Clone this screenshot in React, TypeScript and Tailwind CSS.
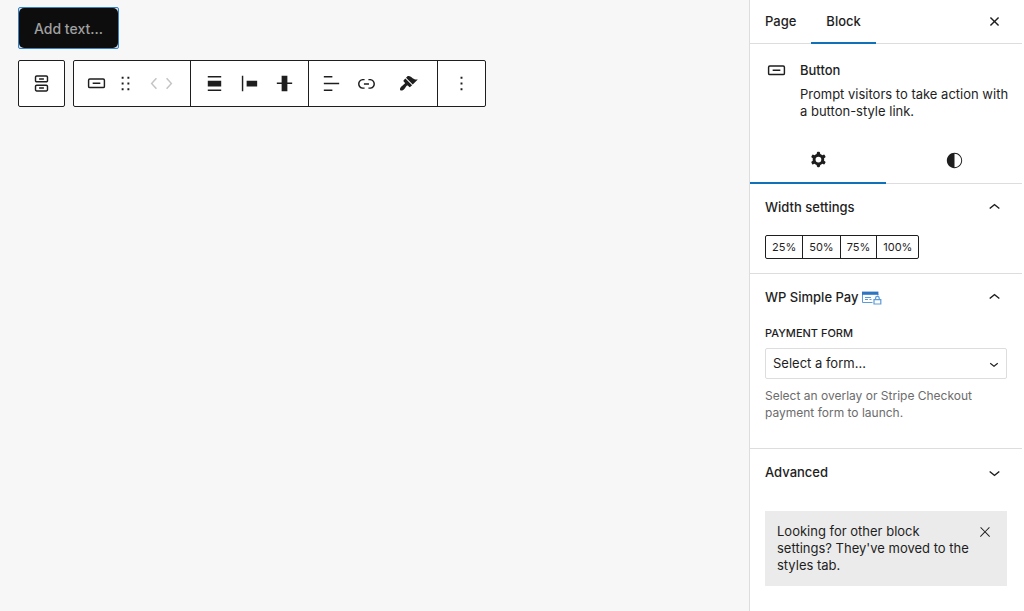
import { useState, type ReactNode } from "react";
import clsx from "clsx";

const icons = {
  buttons:
    "M14.5 17.5H9.5V16H14.5V17.5Z M14.5 8H9.5V6.5H14.5V8Z M7 3.5H17C18.1046 3.5 19 4.39543 19 5.5V9C19 10.1046 18.1046 11 17 11H7C5.89543 11 5 10.1046 5 9V5.5C5 4.39543 5.89543 3.5 7 3.5ZM17 5H7C6.72386 5 6.5 5.22386 6.5 5.5V9C6.5 9.27614 6.72386 9.5 7 9.5H17C17.2761 9.5 17.5 9.27614 17.5 9V5.5C17.5 5.22386 17.2761 5 17 5Z M7 13H17C18.1046 13 19 13.8954 19 15V18.5C19 19.6046 18.1046 20.5 17 20.5H7C5.89543 20.5 5 19.6046 5 18.5V15C5 13.8954 5.89543 13 7 13ZM17 14.5H7C6.72386 14.5 6.5 14.7239 6.5 15V18.5C6.5 18.7761 6.72386 19 7 19H17C17.2761 19 17.5 18.7761 17.5 18.5V15C17.5 14.7239 17.2761 14.5 17 14.5Z",
  button:
    "M8 12.5h8V11H8v1.5Z M19 6.5H5a2 2 0 0 0-2 2V15a2 2 0 0 0 2 2h14a2 2 0 0 0 2-2V8.5a2 2 0 0 0-2-2ZM5 8h14a.5.5 0 0 1 .5.5V15a.5.5 0 0 1-.5.5H5a.5.5 0 0 1-.5-.5V8.5A.5.5 0 0 1 5 8Z",
  drag: "M8 7h2V5H8v2zm0 6h2v-2H8v2zm0 6h2v-2H8v2zm6-14v2h2V5h-2zm0 8h2v-2h-2v2zm0 6h2v-2h-2v2z",
  left: "M14.6 7l-1.2-1L8 12l5.4 6 1.2-1-4.6-5z",
  right: "M10.6 6L9.4 7l4.6 5-4.6 5 1.2 1 5.4-6z",
  alignNone: "M5 15h14V9H5v6zm0 4.8h14v-1.5H5v1.5zM5 4.2v1.5h14V4.2H5z",
  justifyLeft: "M9 9v6h11V9H9zM4 20h1.5V4H4v16z",
  verticalCenter: "M20 11h-5V4H9v7H4v1.5h5V20h6v-7.5h5z",
  textLeft: "M4 19.8h8.9v-1.5H4v1.5zm8.9-15.6H4v1.5h8.9V4.2zm-8.9 7v1.5h16v-1.5H4z",
  link: "M15.6 7.2H14v1.5h1.6c2 0 3.7 1.7 3.7 3.7s-1.7 3.7-3.7 3.7H14v1.5h1.6c2.8 0 5.2-2.3 5.2-5.2 0-2.9-2.3-5.2-5.2-5.2zM4.7 12.4c0-2 1.7-3.7 3.7-3.7H10V7.2H8.4c-2.9 0-5.2 2.3-5.2 5.2 0 2.9 2.3 5.2 5.2 5.2H10v-1.5H8.4c-2 0-3.7-1.7-3.7-3.7zm4.6.9h5.3v-1.5H9.3v1.5z",
  more: "M13 19h-2v-2h2v2zm0-6h-2v-2h2v2zm0-6h-2V5h2v2z",
  cog: "M10.289 4.836A1 1 0 0111.275 4h1.306a1 1 0 01.987.836l.244 1.466c.787.26 1.503.679 2.108 1.218l1.393-.522a1 1 0 011.216.437l.653 1.13a1 1 0 01-.23 1.273l-1.148.944a6.025 6.025 0 010 2.435l1.149.946a1 1 0 01.23 1.272l-.653 1.13a1 1 0 01-1.216.437l-1.394-.522c-.605.54-1.32.958-2.108 1.218l-.244 1.466a1 1 0 01-.987.836h-1.306a1 1 0 01-.986-.836l-.244-1.466a5.995 5.995 0 01-2.108-1.218l-1.394.522a1 1 0 01-1.217-.436l-.653-1.131a1 1 0 01.23-1.272l1.149-.946a6.026 6.026 0 010-2.435l-1.148-.944a1 1 0 01-.23-1.272l.653-1.131a1 1 0 011.217-.437l1.393.522a5.994 5.994 0 012.108-1.218l.244-1.466zM14.929 12a3 3 0 11-6 0 3 3 0 016 0z",
  styles:
    "M12 4c-4.4 0-8 3.6-8 8s3.6 8 8 8 8-3.6 8-8-3.6-8-8-8zm0 15V5c3.9 0 7 3.1 7 7s-3.1 7-7 7z",
  up: "M6.5 12.4L12 8l5.5 4.4-.9 1.2L12 10l-4.5 3.6-1-1.2z",
  down: "M17.5 11.6L12 16l-5.5-4.4.9-1.2L12 14l4.5-3.6 1 1.2z",
  closeSmall:
    "M12 13.06l3.712 3.713 1.061-1.06L13.061 12l3.712-3.712-1.06-1.06L12 10.938 8.288 7.227l-1.061 1.06L10.939 12l-3.712 3.712 1.06 1.061L12 13.061z",
  close:
    "M13 11.8l6.1-6.3-1-1-6.1 6.2-6.1-6.2-1 1 6.1 6.3-6.5 6.7 1 1 6.5-6.6 6.5 6.6 1-1z",
};

type IconName = keyof typeof icons;

const Icon = ({ name, size = 23 }: { name: IconName; size?: number }) => (
  <svg
    viewBox="0 0 24 24"
    width={size}
    height={size}
    fill="currentColor"
    fillRule="evenodd"
    className="shrink-0"
    aria-hidden="true"
  >
    <path d={icons[name]} />
  </svg>
);

const BrushIcon = () => (
  <svg viewBox="0 0 20 20" width="19" height="19" fill="currentColor" aria-hidden="true">
    <path d="M14.48 11.06L7.41 3.99l1.5-1.5c.5-.56 2.3-.47 3.51.32 1.21.8 1.43 1.28 2.91 2.1 1.18.64 2.45 1.26 4.45.85zm-.71.71L6.7 4.7 4.93 6.47c-.39.39-.39 1.02 0 1.41l1.06 1.06c.39.39.39 1.03 0 1.42-.6.6-1.43 1.11-2.21 1.69-.35.26-.7.53-1.01.84C1.43 14.23.4 16.08 1.4 17.07c.99 1 2.84-.03 4.18-1.36.31-.31.58-.66.85-1.02.57-.78 1.08-1.61 1.69-2.21.39-.39 1.02-.39 1.41 0l1.06 1.06c.39.39 1.02.39 1.41 0z" />
  </svg>
);

const SimplePayIcon = () => (
  <svg viewBox="0 0 20 14" width="20" height="14" fill="none" stroke="#5b9bd8" aria-hidden="true">
    <path d="M.5 3v8.5h10M15.9 3v1.5" />
    <path d="M0 .6h16.4v3.2H0z" fill="#2f74c0" stroke="none" />
    <path d="M3 6.5h6M3 8.5h3M7.5 8.5h2" />
    <path d="M12 8.6h6.8v4.4H12zM13.6 8.5V7.1a1.8 1.8 0 0 1 3.6 0v1.4" strokeWidth="1.2" />
  </svg>
);

interface ToolButtonProps {
  label: string;
  children: ReactNode;
  className?: string;
  disabled?: boolean;
}

const ToolButton = ({ label, children, className = "w-[35px]", disabled }: ToolButtonProps) => (
  <button
    type="button"
    aria-label={label}
    disabled={disabled}
    className={clsx("flex h-full items-center justify-center disabled:text-[#c4c4c4]", className)}
  >
    {children}
  </button>
);

const Toolbar = () => (
  <div className="flex gap-2">
    <div className="flex h-[47px] rounded-xs border border-[#1e1e1e] bg-white">
      <ToolButton label="Select Buttons" className="w-[45px]">
        <Icon name="buttons" />
      </ToolButton>
    </div>
    <div className="flex h-[47px] divide-x divide-[#1e1e1e] rounded-xs border border-[#1e1e1e] bg-white">
      <div className="flex pr-[15px] pl-[5px]">
        <ToolButton label="Button">
          <Icon name="button" />
        </ToolButton>
        <ToolButton label="Drag" className="w-[23px]">
          <Icon name="drag" />
        </ToolButton>
        <div className="flex pl-[10px]">
          <ToolButton label="Move left" className="w-[14px]" disabled>
            <Icon name="left" />
          </ToolButton>
          <ToolButton label="Move right" className="w-[14px]" disabled>
            <Icon name="right" />
          </ToolButton>
        </div>
      </div>
      <div className="flex px-[6px]">
        <ToolButton label="Align">
          <Icon name="alignNone" />
        </ToolButton>
        <ToolButton label="Justify items">
          <Icon name="justifyLeft" />
        </ToolButton>
        <ToolButton label="Vertical alignment">
          <Icon name="verticalCenter" />
        </ToolButton>
      </div>
      <div className="flex px-[5px]">
        <ToolButton label="Align text">
          <Icon name="textLeft" />
        </ToolButton>
        <ToolButton label="Link">
          <Icon name="link" />
        </ToolButton>
        <ToolButton label="Appearance" className="w-12">
          <BrushIcon />
        </ToolButton>
      </div>
      <ToolButton label="Options" className="w-[47px]">
        <Icon name="more" />
      </ToolButton>
    </div>
  </div>
);

interface PanelProps {
  title: string;
  icon?: ReactNode;
  open?: boolean;
  className?: string;
  children?: ReactNode;
}

const Panel = ({ title, icon, open = true, className, children }: PanelProps) => (
  <section className={className}>
    <h2>
      <button
        type="button"
        aria-expanded={open}
        className="flex h-[47px] w-full items-center justify-between pr-4 pl-[15px] font-medium"
      >
        <span className="flex items-center gap-1">
          {title}
          {icon}
        </span>
        <Icon name={open ? "up" : "down"} />
      </button>
    </h2>
    {children && <div className="px-[15px]">{children}</div>}
  </section>
);

const Sidebar = () => {
  const [form, setForm] = useState("");

  return (
    <aside className="w-[275px] shrink-0 border-l border-[#ddd] bg-white pr-[2px] text-[13px] leading-[17px]">
      <header className="flex h-11 items-stretch border-b border-[#ddd] font-medium">
        <button type="button" className="px-[15px]">
          Page
        </button>
        <button type="button" className="-mb-px border-b-2 border-[#1070b8] px-[15px]">
          Block
        </button>
        <button type="button" aria-label="Close settings" className="mr-4 ml-auto">
          <Icon name="closeSmall" />
        </button>
      </header>

      <div className="flex gap-3 pt-[15px] pr-2 pb-[17px] pl-[15px]">
        <Icon name="button" />
        <div className="pt-[3px]">
          <h2 className="font-medium">Button</h2>
          <p className="pt-[7px]">Prompt visitors to take action with a button-style link.</p>
        </div>
      </div>

      <div className="grid h-[47px] grid-cols-2 border-b border-[#ddd]">
        <button
          type="button"
          aria-label="Settings"
          className="-mb-px flex items-center justify-center border-b-2 border-[#1070b8]"
        >
          <Icon name="cog" />
        </button>
        <button type="button" aria-label="Styles" className="flex items-center justify-center">
          <Icon name="styles" />
        </button>
      </div>

      <Panel title="Width settings" className="border-b border-[#ddd] pb-[14px]">
        <div className="mt-1 flex w-fit divide-x divide-[#1e1e1e] rounded-xs border border-[#1e1e1e] text-[11px]">
          {["25%", "50%", "75%", "100%"].map((width) => (
            <button key={width} type="button" className="h-[22px] px-[6px]">
              {width}
            </button>
          ))}
        </div>
      </Panel>

      <Panel title="WP Simple Pay" icon={<SimplePayIcon />} className="border-b border-[#ddd] pb-[27px]">
        <label htmlFor="payment-form" className="block pt-1 text-[11px] font-medium uppercase">
          Payment form
        </label>
        <div className="relative mt-[6px]">
          <select
            id="payment-form"
            value={form}
            onChange={(e) => setForm(e.target.value)}
            className="block h-[31px] w-full appearance-none rounded-xs border border-[#ddd] bg-white px-[7px]"
          >
            <option value="">Select a form...</option>
          </select>
          <span className="pointer-events-none absolute inset-y-0 right-1 flex items-center">
            <Icon name="down" size={18} />
          </span>
        </div>
        <p className="pt-2 text-[12px] text-[#6c6c6c]">
          Select an overlay or Stripe Checkout payment form to launch.
        </p>
      </Panel>

      <Panel title="Advanced" open={false} />

      <div className="mx-[15px] mt-[15px] flex items-start justify-between bg-[#ebebeb] p-3 pr-[14px]">
        <p className="w-[196px]">
          Looking for other block settings? They've moved to the styles tab.
        </p>
        <button type="button" aria-label="Dismiss" className="pt-px">
          <Icon name="close" size={16} />
        </button>
      </div>
    </aside>
  );
};

const App = () => {
  return (
    <div className="flex min-h-screen bg-[#f7f7f7] font-['Inter',sans-serif] text-[#1e1e1e]">
      <main className="min-w-0 flex-1 pt-[7px] pl-[18px]">
        <div className="mb-[11px] w-fit rounded-xs border border-[#3582c4] bg-[#cfe0ee]">
          <button
            type="button"
            className="block h-10 rounded-[5px] bg-[#0d0d0d] px-[15px] text-[14px] font-medium text-[#a0a0a0]"
          >
            Add text...
          </button>
        </div>
        <Toolbar />
      </main>
      <Sidebar />
    </div>
  );
};

export default App;
